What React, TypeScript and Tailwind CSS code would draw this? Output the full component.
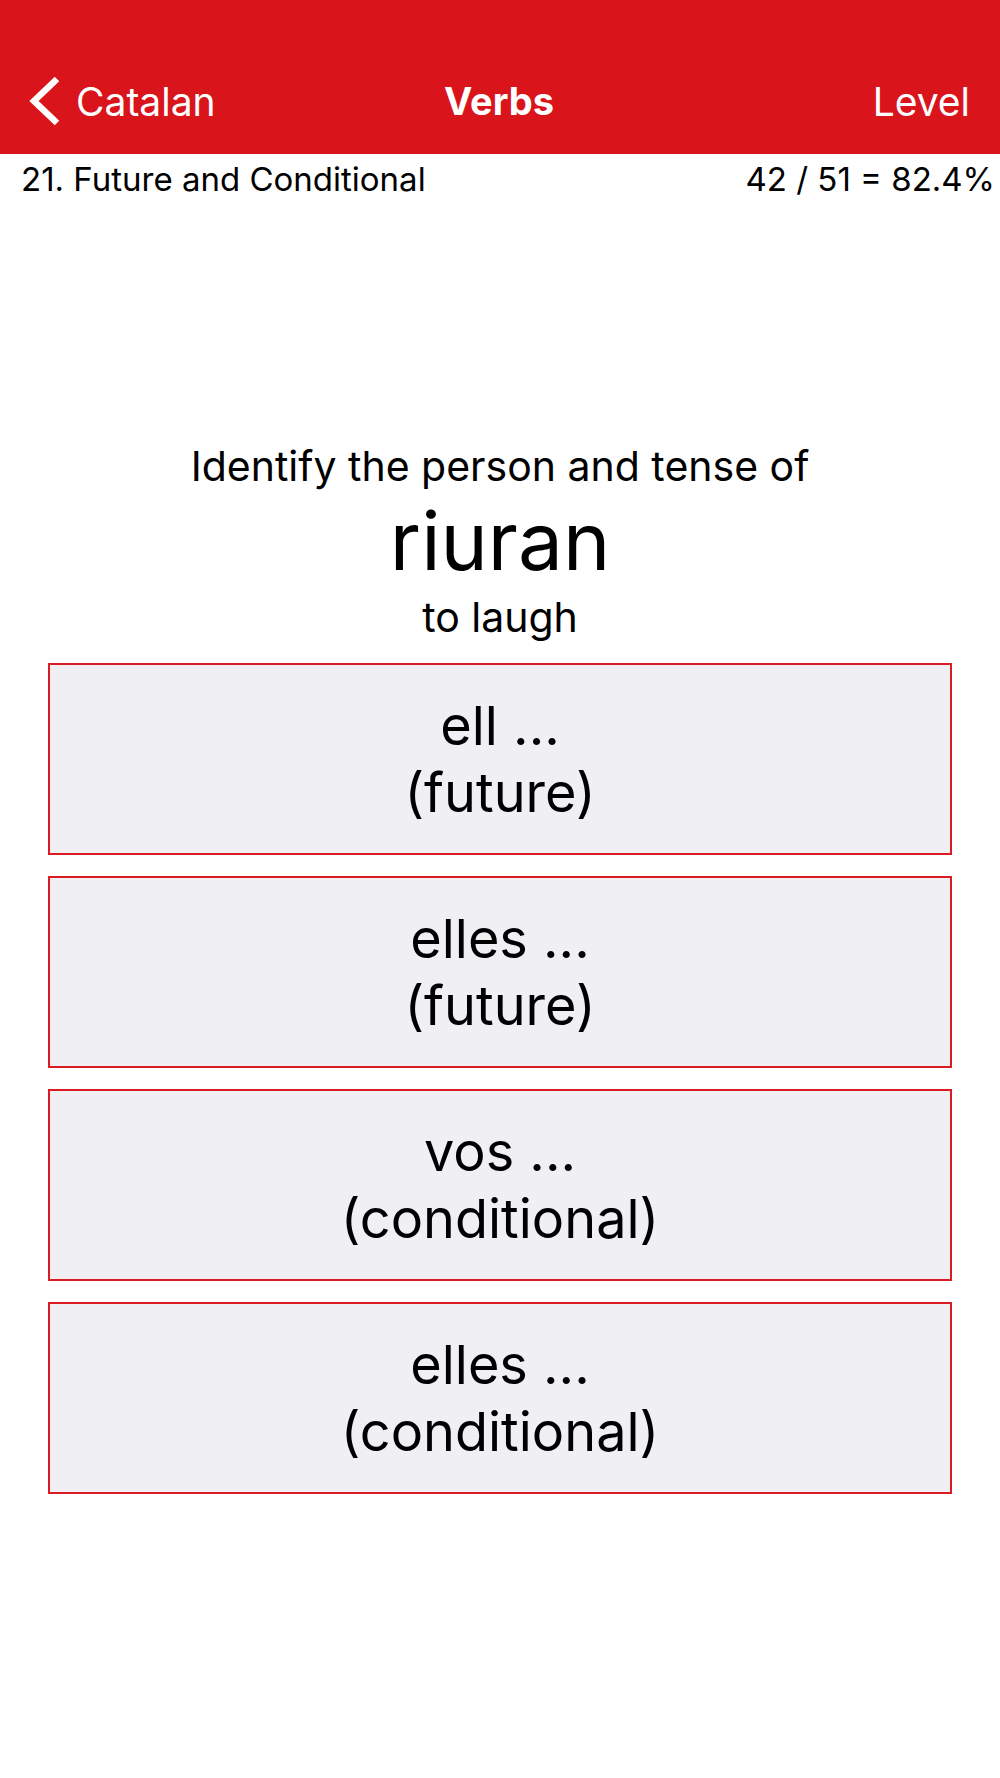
const choices = [
  { person: "ell ...", tense: "(future)" },
  { person: "elles ...", tense: "(future)" },
  { person: "vos ...", tense: "(conditional)" },
  { person: "elles ...", tense: "(conditional)" },
];

const BackChevron = () => (
  <svg width="34" height="52" viewBox="0 0 34 52" fill="none" className="shrink-0">
    <path d="M29 4 L6 26 L29 48" stroke="white" strokeWidth="6.5" strokeLinecap="butt" strokeLinejoin="miter" />
  </svg>
);

export default function App() {
  return (
    <div className="min-h-[1778px] w-[1000px] bg-white text-black font-['Inter','Noto_Sans',sans-serif]">
      <header className="flex h-[154px] items-center bg-[#d9141b] px-[28px] pt-[48px] text-white">
        <div className="flex flex-1 items-center gap-[14px]">
          <BackChevron />
          <span className="text-[39px] leading-none">Catalan</span>
        </div>
        <div className="text-[38px] font-bold leading-none">Verbs</div>
        <div className="flex flex-1 justify-end pr-[2px] text-[39px] leading-none">Level</div>
      </header>

      <div className="flex h-[52px] items-center justify-between pl-[21px] pr-[5px] text-[33px]">
        <span>21. Future and Conditional</span>
        <span>42 / 51 = 82.4%</span>
      </div>

      <section className="mt-[235px] flex flex-col items-center">
        <p className="text-[41px] leading-[50px]">Identify the person and tense of</p>
        <p className="mt-[2px] text-[80px] leading-[96px]">riuran</p>
        <p className="mt-[3px] text-[41px] leading-[50px]">to laugh</p>
      </section>

      <div className="mx-[48px] mt-[21px] flex flex-col gap-[21px]">
        {choices.map((c, i) => (
          <button
            key={i}
            className="flex h-[192px] flex-col items-center justify-center border-2 border-[#dc1a22] bg-[#efeff4] text-[54px] leading-[67px]"
          >
            <span>{c.person}</span>
            <span>{c.tense}</span>
          </button>
        ))}
      </div>
    </div>
  );
}
